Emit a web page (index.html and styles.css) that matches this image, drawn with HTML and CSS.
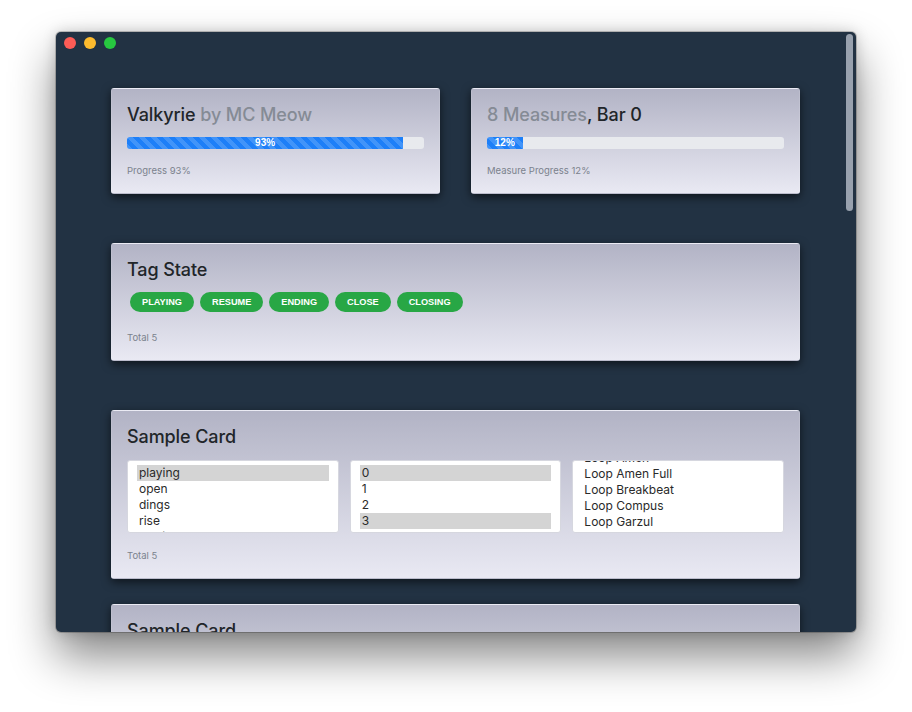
FILE: index.html
```html
<!DOCTYPE html>
<html>
<head>
<meta charset="utf-8">
<link rel="stylesheet" href="styles.css">
</head>
<body>
<div class="window">
  <div class="traffic">
    <span class="light red"></span>
    <span class="light yellow"></span>
    <span class="light green"></span>
  </div>
  <div class="scrollbar"></div>
  <div class="content">
    <div class="row">
      <div class="card">
        <div class="card-title">Valkyrie <span class="muted">by MC Meow</span></div>
        <div class="progress"><div class="progress-bar" style="width:93%">93%</div></div>
        <div class="card-foot foot-progress">Progress 93%</div>
      </div>
      <div class="card">
        <div class="card-title"><span class="muted">8 Measures</span>, Bar 0</div>
        <div class="progress"><div class="progress-bar" style="width:12%">12%</div></div>
        <div class="card-foot foot-progress">Measure Progress 12%</div>
      </div>
    </div>

    <div class="card card-tags">
      <div class="card-title">Tag State</div>
      <div class="badges">
        <span class="badge">Playing</span>
        <span class="badge">Resume</span>
        <span class="badge">Ending</span>
        <span class="badge">Close</span>
        <span class="badge">Closing</span>
      </div>
      <div class="card-foot foot-tags">Total 5</div>
    </div>

    <div class="card card-sample">
      <div class="card-title">Sample Card</div>
      <div class="lists">
        <div class="listbox">
          <div class="list">
            <div class="opt sel">playing</div>
            <div class="opt">open</div>
            <div class="opt">dings</div>
            <div class="opt">rise</div>
            <div class="opt">closing</div>
          </div>
        </div>
        <div class="listbox">
          <div class="list">
            <div class="opt sel">0</div>
            <div class="opt">1</div>
            <div class="opt">2</div>
            <div class="opt sel">3</div>
            <div class="opt">4</div>
          </div>
        </div>
        <div class="listbox">
          <div class="list scrolled">
            <div class="opt">Loop Amen</div>
            <div class="opt">Loop Amen Full</div>
            <div class="opt">Loop Breakbeat</div>
            <div class="opt">Loop Compus</div>
            <div class="opt">Loop Garzul</div>
            <div class="opt">Loop Industrial</div>
          </div>
        </div>
      </div>
      <div class="card-foot foot-lists">Total 5</div>
    </div>

    <div class="card card-last">
      <div class="card-title">Sample Card</div>
    </div>
  </div>
</div>
</body>
</html>
```
FILE: styles.css
```css
html, body {
  margin: 0;
  padding: 0;
  background: #ffffff;
}
body {
  box-sizing: border-box;
  height: 712px;
  overflow: hidden;
  padding: 32px 56px;
  font-family: Inter, "Noto Sans", "Liberation Sans", sans-serif;
}
.window {
  position: relative;
  width: 800px;
  height: 600px;
  background: #223243;
  border-radius: 5px;
  overflow: hidden;
  box-shadow: 0 24px 46px rgba(0, 0, 0, 0.48), 0 0 14px rgba(0, 0, 0, 0.18), 0 0 0 1px rgba(0, 0, 0, 0.2);
}
.traffic {
  position: absolute;
  top: 5px;
  left: 8px;
  display: flex;
  gap: 8px;
  z-index: 2;
}
.light {
  width: 12px;
  height: 12px;
  border-radius: 50%;
}
.red { background: #fd5c56; }
.yellow { background: #fdbb2e; }
.green { background: #27c840; }
.scrollbar {
  position: absolute;
  top: 2px;
  right: 3px;
  width: 7px;
  height: 177px;
  background: #98a1ae;
  border-radius: 4px;
  z-index: 2;
}
.content {
  padding: 56px 56px 0 55px;
}
.row {
  display: flex;
  gap: 31px;
  margin-bottom: 49px;
}
.row .card {
  flex: 1;
  height: 106px;
}
.card {
  box-sizing: border-box;
  background: linear-gradient(to bottom, #b2b3c5, #e9e9f3);
  border-radius: 3px;
  padding: 15px 15px 17px;
  box-shadow: 0 3px 10px rgba(0, 0, 0, 0.6);
  border: 1px solid rgba(255, 255, 255, 0.12);
}
.card-title {
  font-size: 18px;
  line-height: 22px;
  font-weight: 500;
  color: #212529;
  letter-spacing: -0.1px;
}
.muted {
  color: #858b95;
}
.progress {
  margin-top: 11px;
  height: 12px;
  background: #e8eaee;
  border-radius: 3px;
  overflow: hidden;
  display: flex;
}
.progress-bar {
  height: 12px;
  background-color: #1d7ff8;
  background-image: linear-gradient(45deg, rgba(255,255,255,0.16) 25%, transparent 25%, transparent 50%, rgba(255,255,255,0.16) 50%, rgba(255,255,255,0.16) 75%, transparent 75%, transparent);
  background-size: 12px 12px;
  color: #ffffff;
  font-family: "Liberation Sans", Arial, sans-serif;
  font-weight: bold;
  font-size: 10px;
  line-height: 12px;
  text-align: center;
}
.card-foot {
  font-size: 9.5px;
  line-height: 12px;
  color: #7b828d;
}
.foot-progress { margin-top: 16px; }
.card-tags {
  height: 118px;
  margin-bottom: 49px;
}
.badges {
  display: flex;
  margin-top: 8px;
}
.badge {
  margin: 3px;
  height: 20px;
  padding: 0 12px;
  border-radius: 10px;
  background: #28a745;
  color: #ffffff;
  font-family: "Liberation Sans", Arial, sans-serif;
  font-weight: bold;
  font-size: 9.2px;
  line-height: 20px;
  text-transform: uppercase;
}
.foot-tags { margin-top: 17px; }
.card-sample {
  height: 169px;
  margin-bottom: 25px;
}
.lists {
  display: flex;
  gap: 11px;
  margin-top: 12px;
}
.listbox {
  flex: 1;
  height: 73px;
  box-sizing: border-box;
  background: #ffffff;
  border-radius: 3px;
  border: 1px solid #d6d7df;
  overflow: hidden;
  padding: 4px 9px 0 9px;
}
.list.scrolled {
  margin-top: -15px;
}
.opt {
  height: 16px;
  line-height: 16px;
  font-size: 12px;
  color: #2a2a2a;
  padding-left: 2px;
  white-space: nowrap;
}
.opt.sel {
  background: #d4d4d4;
}
.foot-lists { margin-top: 17px; }
.card-last {
  height: 120px;
}
```
